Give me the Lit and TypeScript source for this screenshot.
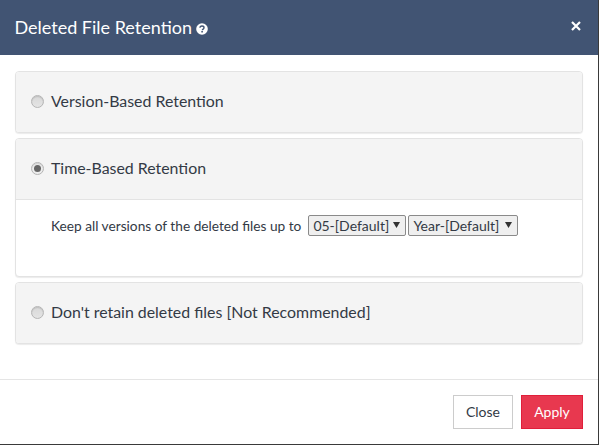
import { LitElement, html, css } from "lit";
import { customElement } from "lit/decorators.js";

@customElement("app-root")
export class AppRoot extends LitElement {
  static styles = css`
    :host { display: block; width: 599px; height: 445px; background: #3a3a3a; overflow: hidden; font-family: Lato, sans-serif; color: #333a45; }
    * { box-sizing: border-box; }
    .modal { width: 598px; height: 444px; background: #fff; display: flex; flex-direction: column; }
    .head { height: 55px; flex: none; background: #415473; color: #fff; display: flex; align-items: center; padding: 0 17px 0 15px; }
    .title { font-size: 18px; line-height: 55px; margin-left: -0.5px; }
    .help { margin-left: 4px; margin-top: 3px; display: block; }
    .x { margin-left: auto; margin-top: -3px; display: block; }
    .body { flex: 1; padding: 16px 15px 0; display: flex; flex-direction: column; gap: 5px; }
    .panel { border: 1px solid #e3e3e3; border-radius: 4px; box-shadow: 0 1px 1px rgba(0,0,0,.08); background: #fff; overflow: hidden; }
    .phead { height: 60px; background: #f4f4f4; display: flex; align-items: center; padding: 0 0 4px 15px; font-size: 15.9px; gap: 7px; }
    .phead.open { border-bottom: 1px solid #e3e3e3; height: 61px; }
    .radio { width: 13px; height: 13px; margin: 0 0 -3px; flex: none; display: block; border-radius: 50%; border: 1px solid #b5b5b5; background: linear-gradient(#d8d8d8, #e4e4e4); box-shadow: inset 0 1px 1px rgba(0,0,0,.12); position: relative; }
    .radio.on { background: #ededed; display: flex; align-items: center; justify-content: center; }
    .dot { width: 7px; height: 7px; border-radius: 50%; background: #666; }
    .pbody { height: 76px; padding: 15px 0 0 35px; font-size: 13.7px; display: flex; align-items: flex-start; }
    .lbl { line-height: 21px; margin-right: 7px; }
    select {
      appearance: none; -webkit-appearance: none;
      font-family: Lato, sans-serif; font-size: 14px; height: 21px; color: #333a45; margin: 0 2px 0 0; padding: 0 0 0 4px;
      background: #efefef url("data:image/svg+xml,%3Csvg xmlns='http://www.w3.org/2000/svg' width='7' height='6'%3E%3Cpath d='M0 0H7L3.5 6Z' fill='%23333'/%3E%3C/svg%3E") no-repeat right 5px top 6px;
      border: 1px solid #8a8a8a; border-radius: 2px;
    }
    .s1 { width: 98px; }
    .s2 { width: 110px; }
    .foot { height: 65px; flex: none; border-top: 1px solid #e5e5e5; display: flex; justify-content: flex-end; align-items: flex-start; gap: 8px; padding: 15px 15px 0 0; }
    button { font-family: Lato, sans-serif; font-size: 14px; height: 34px; padding: 0 0 2px; background: #fff; color: #333a45; border: 1px solid #ccc; }
    .close { width: 60px; }
    .apply { width: 62px; background: #e8384f; border-color: #e01f3a; color: #fff; }
  `;

  render() {
    return html`
      <div class="modal">
        <div class="head">
          <span class="title">Deleted File Retention</span>
          <svg class="help" width="12" height="12" viewBox="0 0 12 12">
            <circle cx="6" cy="6" r="5.8" fill="#fff"/>
            <path d="M4 4.8C4 3.6 4.9 3 6 3s2 .7 2 1.7c0 1.4-1.6 1.4-1.6 2.5" fill="none" stroke="#415473" stroke-width="1.4"/>
            <rect x="5.3" y="8" width="1.6" height="1.5" fill="#415473"/>
          </svg>
          <svg class="x" width="10" height="10" viewBox="0 0 10 10"><path d="M1 1L9 9M9 1L1 9" stroke="#fff" stroke-width="2.2" fill="none"/></svg>
        </div>
        <div class="body">
          <div class="panel"><div class="phead"><span class="radio"></span>Version-Based Retention</div></div>
          <div class="panel">
            <div class="phead open"><span class="radio on"><span class="dot"></span></span>Time-Based Retention</div>
            <div class="pbody">
              <span class="lbl">Keep all versions of the deleted files up to</span>
              <select class="s1"><option>05-[Default]</option></select>
              <select class="s2"><option>Year-[Default]</option></select>
            </div>
          </div>
          <div class="panel"><div class="phead"><span class="radio"></span>Don't retain deleted files [Not Recommended]</div></div>
        </div>
        <div class="foot">
          <button class="close">Close</button>
          <button class="apply">Apply</button>
        </div>
      </div>
    `;
  }
}
